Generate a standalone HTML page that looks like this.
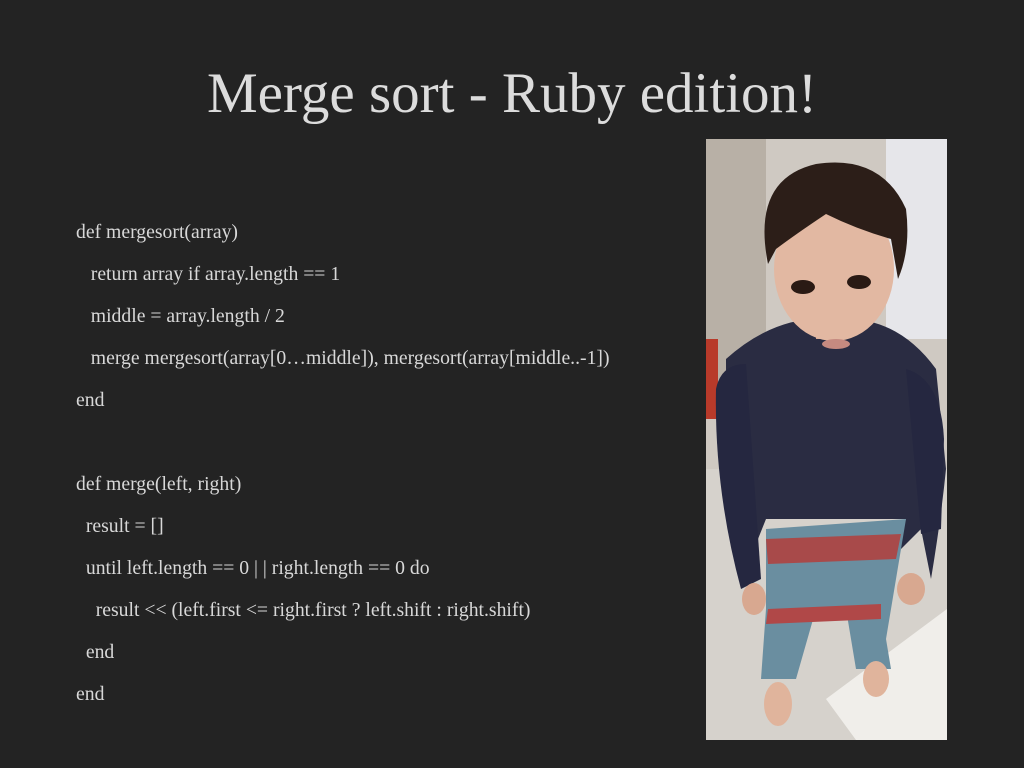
<!DOCTYPE html>
<html><head><meta charset="utf-8"><style>
html,body{margin:0;padding:0;width:1024px;height:768px;background:#232323;overflow:hidden}
.t{position:absolute;left:0;width:1024px;top:61px;text-align:center;font-family:"Liberation Serif",serif;font-size:57px;color:#dcdcdc}
.c{position:absolute;left:76px;font-family:"Liberation Serif",serif;font-size:19.7px;color:#d8d8d8;white-space:pre;line-height:20px}
.p{position:absolute;left:706px;top:139px;width:241px;height:601px;overflow:hidden}
</style></head><body>
<div class="t">Merge sort - Ruby edition!</div>
<div class="c" style="top:222px">def mergesort(array)</div>
<div class="c" style="top:264px">   return array if array.length == 1</div>
<div class="c" style="top:306px">   middle = array.length / 2</div>
<div class="c" style="top:348px">   merge mergesort(array[0…middle]), mergesort(array[middle..-1])</div>
<div class="c" style="top:390px">end</div>
<div class="c" style="top:474px">def merge(left, right)</div>
<div class="c" style="top:516px">  result = []</div>
<div class="c" style="top:558px">  until left.length == 0 | | right.length == 0 do</div>
<div class="c" style="top:600px">    result &lt;&lt; (left.first &lt;= right.first ? left.shift : right.shift)</div>
<div class="c" style="top:642px">  end</div>
<div class="c" style="top:684px">end</div>
<div class="p">
<svg width="241" height="601" viewBox="0 0 241 601">
<rect width="241" height="601" fill="#cfc9c2"/>
<rect x="0" y="0" width="60" height="260" fill="#b8b0a6"/>
<rect x="180" y="0" width="61" height="200" fill="#e6e6ea"/>
<rect x="0" y="330" width="241" height="271" fill="#d6d2cc"/>
<polygon points="120,560 241,470 241,601 150,601" fill="#f0eeea"/>
<rect x="0" y="200" width="12" height="80" fill="#b83a2a"/>
<path d="M20,220 Q70,175 128,180 Q190,175 230,230 L240,330 Q235,380 225,440 L215,390 L185,420 L200,380 L60,380 L48,410 L30,390 Q20,330 20,220Z" fill="#2a2c42"/>
<path d="M10,250 Q15,225 40,225 L55,440 L35,450 Q8,350 10,250Z" fill="#252740"/>
<path d="M200,230 Q235,240 238,300 L235,390 L215,395 Z" fill="#252740"/>
<rect x="110" y="175" width="32" height="25" fill="#d8a890"/>
<ellipse cx="128" cy="130" rx="60" ry="72" fill="#e2b8a2"/>
<path d="M62,125 Q45,40 110,25 Q175,15 200,70 Q205,110 192,140 L185,100 Q150,90 120,75 Q90,95 70,110 Z" fill="#2c1e18"/>
<ellipse cx="97" cy="148" rx="12" ry="7" fill="#2a1a14"/>
<ellipse cx="153" cy="143" rx="12" ry="7" fill="#2a1a14"/>
<ellipse cx="130" cy="205" rx="14" ry="5" fill="#c68a80"/>
<path d="M60,390 L200,380 L180,500 L185,530 L150,530 L140,470 L110,470 L90,540 L55,540 L60,470 Z" fill="#6a8ea0"/>
<path d="M60,400 L195,395 L190,420 L62,425Z" fill="#a84a4a"/>
<path d="M62,470 L175,465 L175,480 L60,485Z" fill="#b04848"/>
<ellipse cx="72" cy="565" rx="14" ry="22" fill="#e0b49c"/>
<ellipse cx="170" cy="540" rx="13" ry="18" fill="#e0b49c"/>
<ellipse cx="48" cy="460" rx="12" ry="16" fill="#d8a890"/>
<ellipse cx="205" cy="450" rx="14" ry="16" fill="#d8a890"/>
</svg>
</div>
</body></html>
